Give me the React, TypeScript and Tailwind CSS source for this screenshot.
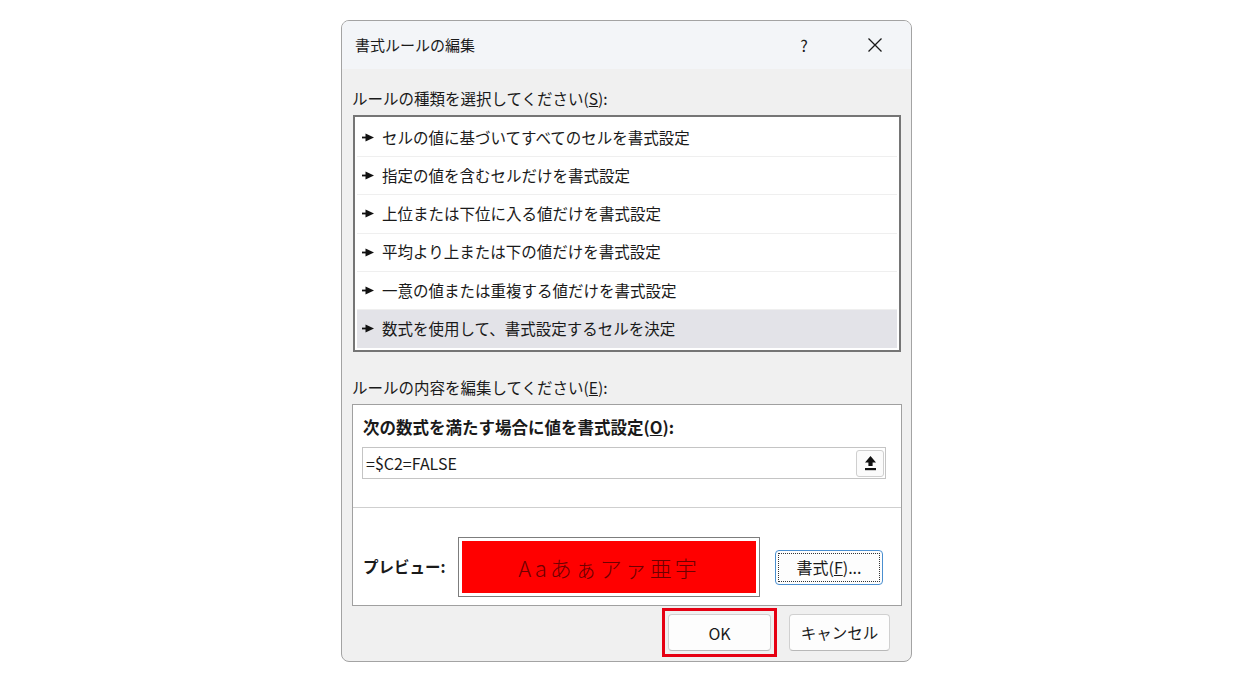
import React from "react";

const jp = { fontFamily: '"Noto Sans CJK JP", "Noto Sans", sans-serif' };

const rules = [
  "セルの値に基づいてすべてのセルを書式設定",
  "指定の値を含むセルだけを書式設定",
  "上位または下位に入る値だけを書式設定",
  "平均より上または下の値だけを書式設定",
  "一意の値または重複する値だけを書式設定",
  "数式を使用して、書式設定するセルを決定",
];

function RuleArrow() {
  return (
    <svg width="12" height="9" viewBox="0 0 12 9" className="shrink-0">
      <rect x="0" y="3.6" width="6" height="1.8" fill="#111" />
      <polygon points="3.5,0.5 12,4.5 3.5,8.5" fill="#111" />
    </svg>
  );
}

function UploadIcon() {
  return (
    <svg width="13" height="16" viewBox="0 0 13 16">
      <polygon points="6.5,1 12,7.5 8.6,7.5 8.6,11 4.4,11 4.4,7.5 1,7.5" fill="#111" />
      <rect x="1" y="13" width="11" height="2.2" fill="#111" />
    </svg>
  );
}

export default function App() {
  return (
    <div className="w-full h-[684px] bg-white flex justify-center pt-[20px] text-[#1a1a1a]" style={jp}>
      <div className="w-[571px] h-[642px] bg-[#f0f0f0] border border-[#a3a3a3] rounded-lg overflow-hidden flex flex-col">
        {/* title bar */}
        <div className="h-[48px] bg-[#f3f5f8] flex items-center shrink-0">
          <span className="pl-[13px] text-[15px] flex-1">書式ルールの編集</span>
          <div className="w-[70px] flex justify-center text-[16px]">?</div>
          <div className="w-[72px] flex justify-center">
            <svg width="16" height="16" viewBox="0 0 16 16">
              <path d="M1.5 1.5 L14.5 14.5 M14.5 1.5 L1.5 14.5" stroke="#1a1a1a" strokeWidth="1.3" />
            </svg>
          </div>
        </div>

        <div className="px-[10px] flex flex-col">
          <div className="mt-[19px] h-[20px] leading-[20px] text-[15.5px]">
            ルールの種類を選択してください(<span className="underline">S</span>):
          </div>

          {/* rule list */}
          <div className="mt-[7px] ml-px h-[237px] w-[548px] border-2 border-[#757575] bg-white p-[2px] flex flex-col">
            {rules.map((r, i) => (
              <div
                key={r}
                className={
                  i === rules.length - 1
                    ? "h-[38.5px] flex items-center gap-[8px] pl-[5px] bg-[#e3e3e8]"
                    : "h-[38.5px] flex items-center gap-[8px] pl-[5px] border-b border-[#efefef]"
                }
              >
                <RuleArrow />
                <span className="text-[15.5px]">{r}</span>
              </div>
            ))}
          </div>

          <div className="mt-[25px] h-[20px] leading-[20px] text-[15.5px]">
            ルールの内容を編集してください(<span className="underline">E</span>):
          </div>

          {/* edit panel */}
          <div className="mt-[7px] h-[202px] w-[550px] border border-[#a0a0a0] bg-white flex flex-col">
            <div className="mt-[12px] ml-[10px] h-[20px] leading-[20px] text-[16.5px] font-bold">
              次の数式を満たす場合に値を書式設定(<span className="underline">O</span>):
            </div>
            <div className="mt-[10px] ml-[9px] mr-[15px] h-[32px] border border-[#c4c4c4] flex items-center">
              <span className="flex-1 pl-[3px] text-[16px]">=$C2=FALSE</span>
              <div className="w-[28px] h-[27px] mr-[1px] border border-[#cfcfcf] rounded-[3px] bg-[#fbfbfb] flex items-center justify-center">
                <UploadIcon />
              </div>
            </div>
            <div className="mt-[28px] h-px bg-[#cfcfcf]" />
            <div className="flex items-center mt-[29px]">
              <span className="ml-[10px] w-[95px] text-[15.5px] font-bold">プレビュー:</span>
              <div className="w-[302px] h-[60px] border border-[#7d7d7d] p-[3px] bg-white">
                <div className="w-full h-full bg-[#ff0000] flex items-center justify-center text-[22px] text-[#6e0000] tracking-[3px] font-light">
                  Aaあぁアァ亜宇
                </div>
              </div>
              <div className="ml-[15px] w-[108px] h-[35px] rounded-[4px] border border-[#4a8fd0] bg-[#fdfdfd] p-[2px]">
                <div className="w-full h-full border border-dotted border-[#333] flex items-center justify-center text-[16px]">
                  書式(<span className="underline">F</span>)...
                </div>
              </div>
            </div>
          </div>

          {/* footer buttons */}
          <div className="flex justify-end items-center gap-[12px] mt-[2px] pr-[11px]">
            <div className="border-[3px] border-[#e60012] p-[3px]">
              <div className="w-[103px] h-[37px] rounded-[4px] border border-[#d0d0d0] border-b-[#b8b8b8] bg-[#fdfdfd] flex items-center justify-center text-[16px]">
                OK
              </div>
            </div>
            <div className="w-[101px] h-[37px] rounded-[4px] border border-[#d0d0d0] border-b-[#b8b8b8] bg-[#fdfdfd] flex items-center justify-center text-[15.5px]">
              キャンセル
            </div>
          </div>
        </div>
      </div>
    </div>
  );
}
